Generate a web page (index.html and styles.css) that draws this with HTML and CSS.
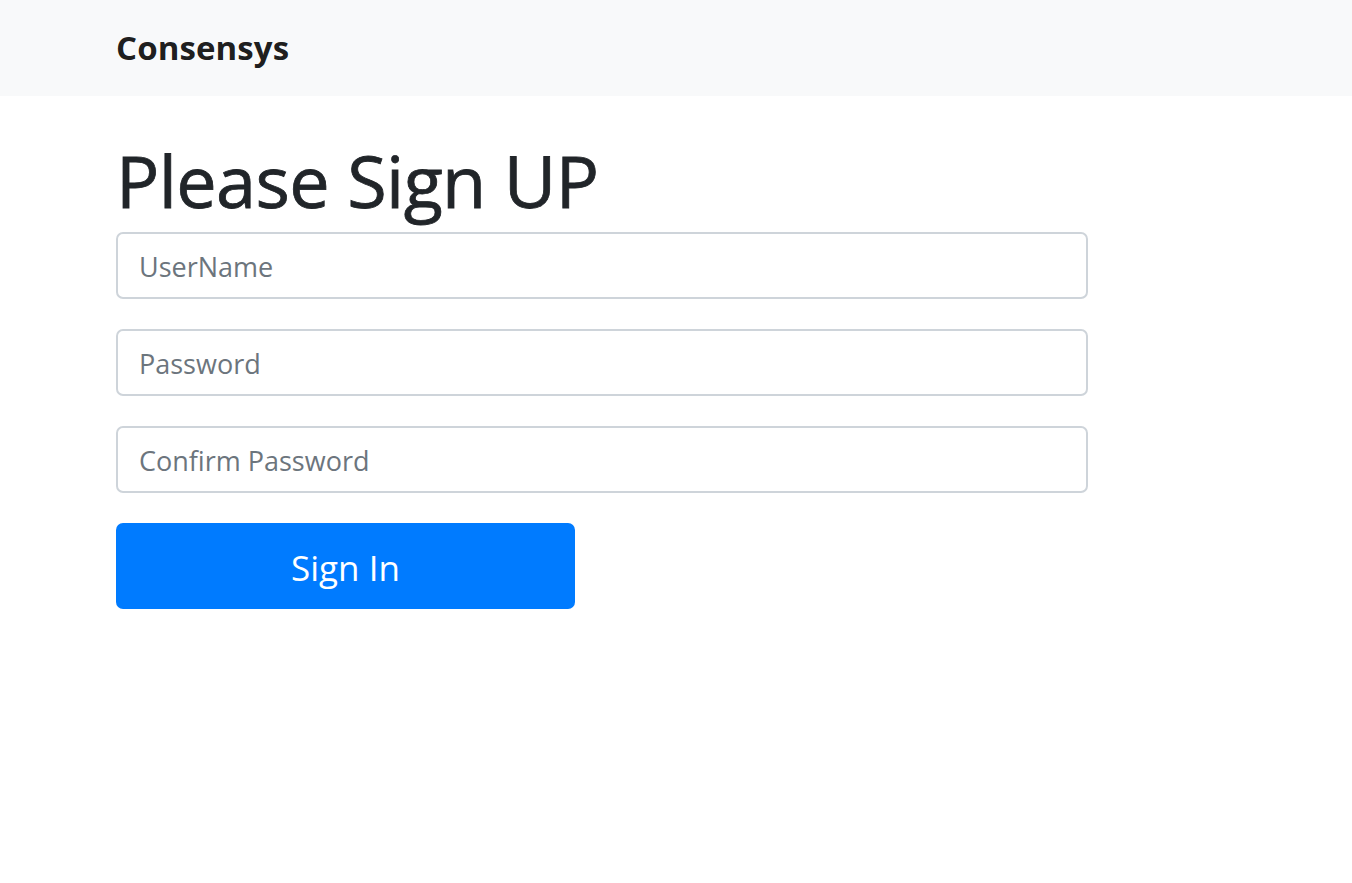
FILE: index.html
```html
<!DOCTYPE html>
<html lang="en">
<head>
<meta charset="utf-8">
<title>Consensys</title>
<link rel="stylesheet" href="styles.css">
</head>
<body>
<nav class="navbar">
  <div class="container">
    <a class="brand" href="#">Consensys</a>
  </div>
</nav>
<main class="container">
  <h1 class="title">Please Sign UP</h1>
  <form class="form">
    <input class="field" type="text" placeholder="UserName" autofocus>
    <input class="field" type="password" placeholder="Password">
    <input class="field" type="password" placeholder="Confirm Password">
    <button class="btn" type="button">Sign In</button>
  </form>
</main>
</body>
</html>
```
FILE: styles.css
```css
* { box-sizing: border-box; }
html, body { margin: 0; padding: 0; }
body {
  font-family: "Open Sans", "Noto Sans", sans-serif;
  background: #ffffff;
  color: #212529;
}
.container {
  padding: 0 0 0 116px;
}
.navbar {
  background: #f8f9fa;
  height: 96px;
  display: flex;
  align-items: center;
}
.brand {
  font-size: 33px;
  font-weight: 700;
  color: rgba(0, 0, 0, 0.9);
  text-decoration: none;
  letter-spacing: 0.1px;
  line-height: 1;
}
.title {
  margin: 0;
  padding-top: 30px;
  font-size: 72px;
  font-weight: 500;
  line-height: 1.5;
  height: 136px;
  color: #212529;
  letter-spacing: -0.6px;
  -webkit-text-stroke: 0.8px #212529;
}
.form {
  display: flex;
  flex-direction: column;
  gap: 30px;
  width: 972px;
}
.field {
  display: block;
  width: 100%;
  height: 67px;
  padding: 2px 21px 0;
  border: 2px solid #ced4da;
  border-radius: 7px;
  font-family: inherit;
  font-size: 27px;
  color: #495057;
  background: #fff;
  outline: none;
  caret-color: #212529;
}
.field::placeholder { color: #6c757d; opacity: 1; }
.field:focus { border-color: #ced4da; box-shadow: none; }
.btn {
  width: 459px;
  height: 86px;
  border: none;
  border-radius: 7px;
  background: #007bff;
  color: #ffffff;
  font-family: inherit;
  font-size: 35px;
  cursor: pointer;
  padding: 2px 0 0;
}
```
